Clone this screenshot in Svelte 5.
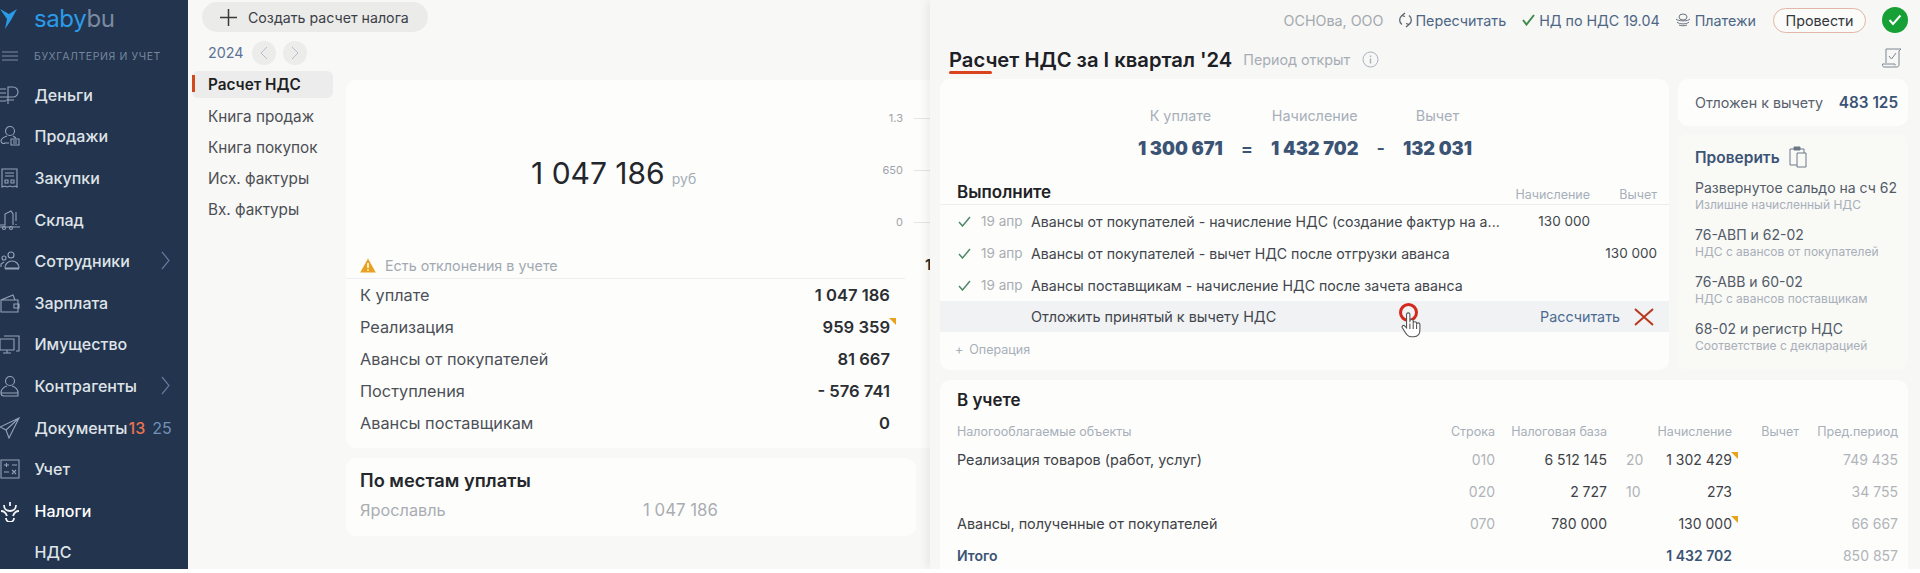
<script>
	const nav = [
		{ label: 'Деньги', icon: 'money' },
		{ label: 'Продажи', icon: 'sales' },
		{ label: 'Закупки', icon: 'buy' },
		{ label: 'Склад', icon: 'store' },
		{ label: 'Сотрудники', icon: 'staff', more: true },
		{ label: 'Зарплата', icon: 'wallet' },
		{ label: 'Имущество', icon: 'assets' },
		{ label: 'Контрагенты', icon: 'partner', more: true },
		{ label: 'Документы', icon: 'send', counts: ['13', '25'] },
		{ label: 'Учет', icon: 'calc' },
		{ label: 'Налоги', icon: 'tax', active: true },
		{ label: 'НДС' }
	];
	const tabs = ['Расчет НДС', 'Книга продаж', 'Книга покупок', 'Исх. фактуры', 'Вх. фактуры'];
	const totals = [
		['К уплате', '1 047 186'],
		['Реализация', '959 359', true],
		['Авансы от покупателей', '81 667'],
		['Поступления', '- 576 741'],
		['Авансы поставщикам', '0']
	];
	const tasks = [
		['Авансы от покупателей - начисление НДС (создание фактур на а...', '130 000', ''],
		['Авансы от покупателей - вычет НДС после отгрузки аванса', '', '130 000'],
		['Авансы поставщикам - начисление НДС после зачета аванса', '', '']
	];
	const checks = [
		['Развернутое сальдо на сч 62', 'Излишне начисленный НДС'],
		['76-АВП и 62-02', 'НДС с авансов от покупателей'],
		['76-АВВ и 60-02', 'НДС с авансов поставщикам'],
		['68-02 и регистр НДС', 'Соответствие с декларацией']
	];
	const ledger = [
		{ name: 'Реализация товаров (работ, услуг)', line: '010', base: '6 512 145', rate: '20', accrued: '1 302 429', mark: true, prev: '749 435' },
		{ name: '', line: '020', base: '2 727', rate: '10', accrued: '273', prev: '34 755' },
		{ name: 'Авансы, полученные от покупателей', line: '070', base: '780 000', rate: '', accrued: '130 000', mark: true, prev: '66 667' }
	];
</script>

<div class="page">
	<aside class="sidebar">
		<div class="brand">
			<svg class="bird" width="18" height="24" viewBox="0 0 18 24"><path d="M0 2 L9 7 L17 2 L11 13 L5 22 L7 12 Z" fill="#2b9be8"/></svg>
			<span class="logo"><b>saby</b><i>bu</i></span>
		</div>
		<div class="section">
			<svg width="16" height="10" viewBox="0 0 16 10"><path d="M0 1h16M0 5h16M0 9h16" stroke="#7b8aa0" fill="none"/></svg>
			<span>БУХГАЛТЕРИЯ И УЧЕТ</span>
		</div>
		<ul class="menu">
			{#each nav as item}
				<li class:active={item.active}>
					<span class="ico">
						{#if item.icon}
							<svg width="20" height="22" viewBox="0 0 20 22" fill="none" stroke={item.active ? '#f2f4f7' : '#93a3b8'} stroke-width="1.1">
								{#if item.icon === 'money'}
									<path d="M0 5h6M0 9h6M0 13h6M0 17h6M8 20V3h5a5 5 0 0 1 0 10H6M6 16h8"/>
								{:else if item.icon === 'sales'}
									<circle cx="10" cy="6" r="4.5"/><path d="M7 11c-3 1-6 2-6 5a2.500 2.500 0 0 0 4 2h4M13 11l3 2M11 14h8v6h-8zM13 16h4M13 18h4"/>
								{:else if item.icon === 'buy'}
									<path d="M2 2h15v18l-2-1-2 1-3-1-3 1-2-1-3 1zM5 6h9M5 9h9M5 13h3v3H5zM11 13h3v3h-3z"/>
								{:else if item.icon === 'store'}
									<path d="M0 16h5V5l6-3 2 3v11M16 3v9M16 15v1M0 18h20"/><circle cx="4" cy="19" r="1.500"/><circle cx="11" cy="19" r="1.500"/>
								{:else if item.icon === 'staff'}
									<circle cx="11" cy="5" r="3"/><circle cx="4" cy="8" r="2"/><path d="M5 18c0-4 3-7 7-7s7 3 7 7zM1 17v-3l3-2M5 19h14"/>
								{:else if item.icon === 'wallet'}
									<path d="M1 8h17v12H1zM1 8l12-5 2 5M14 12h5v4h-5z"/>
								{:else if item.icon === 'assets'}
									<path d="M0 6h14v11H0zM7 17v3M3 20h8M4 3h15v15h-3"/>
								{:else if item.icon === 'partner'}
									<circle cx="10" cy="6" r="4.500"/><path d="M7 11c-3 1-6 3-6 7h17c0-4-3-6-6-7M1 18c0 2 1 3 3 3h14v-5"/>
								{:else if item.icon === 'send'}
									<path d="M19 1 0 10l6 3 3 8zM19 1 6 13"/>
								{:else if item.icon === 'calc'}
									<path d="M1 2h18v18H1zM4 7h5M6.500 5v4M12 7h5M4 14h5M12 12l4 4M16 12l-4 4"/>
								{:else if item.icon === 'tax'}
									<path d="M10 2v4M4 5c0 4 3 6 6 6s6-2 6-6M1 11c3 0 5 2 6 5M19 11c-3 0-5 2-6 5M6 18a4 4 0 0 0 8 0" stroke-width="1.800"/>
								{/if}
							</svg>
						{/if}
					</span>
					<span class="label" class:cut={item.counts}>{item.label}</span>
					{#if item.counts}
						<span class="red">{item.counts[0]}</span><span class="blue">{item.counts[1]}</span>
					{/if}
					{#if item.more}
						<svg class="more" width="9" height="19" viewBox="0 0 9 19"><path d="M1 1l7 8.500L1 18" fill="none" stroke="#64789a" stroke-width="1.200"/></svg>
					{/if}
				</li>
			{/each}
		</ul>
	</aside>

	<section class="mid">
		<div class="create">
			<svg width="17" height="17" viewBox="0 0 17 17"><path d="M8.500 0v17M0 8.500h17" stroke="#3a3a3a" stroke-width="1.500"/></svg>
			<span>Создать расчет налога</span>
		</div>
		<div class="mid-body">
			<nav class="tabs">
				<div class="year">
					<span>2024</span>
					<span class="round"><svg width="8" height="14" viewBox="0 0 8 14"><path d="M7 1 1 7l6 6" fill="none" stroke="#b7bdc6"/></svg></span>
					<span class="round"><svg width="8" height="14" viewBox="0 0 8 14"><path d="m1 1 6 6-6 6" fill="none" stroke="#b7bdc6"/></svg></span>
				</div>
				{#each tabs as tab, i}
					<div class="tab" class:on={i === 0}>{tab}</div>
				{/each}
			</nav>
			<div class="stack">
				<div class="card summary">
					<div class="chart">
						<div class="big"><span>1 047 186</span><small>руб</small></div>
						<div class="axis">
							<div><span>1.3</span><i></i></div>
							<div><span>650</span><i></i></div>
							<div><span>0</span><i></i></div>
						</div>
					</div>
					<div class="warn">
						<svg width="16" height="15" viewBox="0 0 16 15"><path d="M8 0.500 15.800 14.500H0.200Z" fill="#e9a21f"/><path d="M8 5v5M8 11.300v1.500" stroke="#fff" stroke-width="1.500"/></svg>
						<span>Есть отклонения в учете</span>
						<b class="peek">1</b>
					</div>
					{#each totals as row}
						<div class="total">
							<span>{row[0]}</span>
							<b class:flag={row[2]}>{row[1]}</b>
						</div>
					{/each}
				</div>
				<div class="card places">
					<h3>По местам уплаты</h3>
					<div class="place"><span>Ярославль</span><span class="sum-place">1 047 186</span></div>
				</div>
			</div>
		</div>
	</section>

	<section class="panel">
		<header class="top">
			<span class="org">ОСНОва, ООО</span>
			<span class="act recount">
				<svg width="13" height="16" viewBox="0 0 13 16" fill="none" stroke="#5b6470" stroke-width="1.300"><path d="M3 3.500a5.500 5.500 0 0 0 0 9M10 3.500a5.500 5.500 0 0 1 0 9M6 1l-3 2.500 3 1M7 15l3-2.500-3-1"/></svg>
				Пересчитать
			</span>
			<span class="act declared">
				<svg width="13" height="12" viewBox="0 0 13 12" fill="none" stroke="#3f8a4c" stroke-width="2"><path d="M1 6l3.500 4.500L12 1"/></svg>
				НД по НДС 19.04
			</span>
			<span class="act">
				<svg width="16" height="14" viewBox="0 0 16 14" fill="none" stroke="#6b7480"><ellipse cx="8" cy="4" rx="4" ry="3"/><path d="M1 6c2 2.500 12 2.500 14 0M2 9c2 2.500 10 2.500 12 0M4 12c2 1 6 1 8 0"/></svg>
				Платежи
			</span>
			<button class="post">Провести</button>
			<span class="ok"><svg width="14" height="12" viewBox="0 0 14 12" fill="none" stroke="#fff" stroke-width="2"><path d="M1.500 6l3.500 4 7.500-8.500"/></svg></span>
		</header>
		<div class="heading">
			<h1>Расчет НДС за I квартал '24</h1>
			<span class="status">Период открыт</span>
			<svg width="17" height="17" viewBox="0 0 17 17" fill="none" stroke="#a9b1bc"><circle cx="8.500" cy="8.500" r="7.500"/><path d="M8.500 7.500v5M8.500 4.500v1.500" stroke-width="1.400"/></svg>
			<svg class="scroll" width="20" height="20" viewBox="0 0 20 20" fill="none" stroke="#7d8693"><path d="M4 15V1h15l-2 2v14c0 1-1 2-2 2H2c-1 0-1.500-1-1.500-2v-1H13v1.500M7 8l2.500 3L14 5"/></svg>
		</div>
		<div class="grid">
			<div class="card tasks">
				<div class="formula">
					<div><label>К уплате</label><b>1 300 671</b></div>
					<span>=</span>
					<div><label>Начисление</label><b>1 432 702</b></div>
					<span>-</span>
					<div><label>Вычет</label><b>132 031</b></div>
				</div>
				<div class="tasks-head">
					<h2>Выполните</h2>
					<span class="c1">Начисление</span>
					<span class="c2">Вычет</span>
				</div>
				{#each tasks as t}
					<div class="task">
						<svg width="13" height="11" viewBox="0 0 13 11" fill="none" stroke="#4f8a6a" stroke-width="1.500"><path d="M1 6l3.500 4L12 1"/></svg>
						<span class="date">19 апр</span>
						<span class="what">{t[0]}</span>
						<span class="c1">{t[1]}</span>
						<span class="c2">{t[2]}</span>
					</div>
				{/each}
				<div class="task pending">
					<span class="what">Отложить принятый к вычету НДС</span>
					<span class="run">Рассчитать</span>
					<svg class="cross" width="20" height="18" viewBox="0 0 20 18" fill="none" stroke="#b8391f" stroke-width="2"><path d="M1 1l18 16M19 1 1 17"/></svg>
					<span class="click"></span>
					<svg class="hand" width="20" height="27" viewBox="0 0 18 24"><path d="M5 11V3a1.500 1.500 0 0 1 3 0v7V9a1.500 1.500 0 0 1 3 0v2a1.500 1.500 0 0 1 3 0v1a1.500 1.500 0 0 1 3 0v5c0 4-2 6-5.500 6H9c-2.500 0-3.500-1-5-3.500L1.200 15c-.8-1.500 1-3 2.300-1.500L5 15z" fill="#fff" stroke="#555"/><path d="M8 11v5M11 11v5M14 12v4" stroke="#555" fill="none"/></svg>
				</div>
				<div class="add"><span>+</span>Операция</div>
			</div>
			<div class="side">
				<div class="card deferred"><span>Отложен к вычету</span><b>483 125</b></div>
				<div class="card check">
					<div class="check-head">
						<b>Проверить</b>
						<svg width="20" height="22" viewBox="0 0 20 22" fill="none" stroke="#6c7888"><path d="M8 19H1V3h14v4"/><path d="M8 7h9v14H8z"/><path d="M5 1h6v3H5z" fill="#6c7888"/></svg>
					</div>
					{#each checks as c}
						<div class="item"><div>{c[0]}</div><small>{c[1]}</small></div>
					{/each}
				</div>
			</div>
			<div class="card ledger">
				<h2>В учете</h2>
				<div class="row head">
					<span>Налогооблагаемые объекты</span><span class="r">Строка</span><span class="r">Налоговая база</span><span></span><span class="r">Начисление</span><span class="r">Вычет</span><span class="r">Пред.период</span>
				</div>
				{#each ledger as l}
					<div class="row">
						<span>{l.name}</span>
						<span class="r pale">{l.line}</span>
						<span class="r">{l.base}</span>
						<span class="pale rate">{l.rate}</span>
						<span class="r" class:flag={l.mark}>{l.accrued}</span>
						<span></span>
						<span class="r pale">{l.prev}</span>
					</div>
				{/each}
				<div class="row sum">
					<span>Итого</span><span></span><span></span><span></span><span class="r">1 432 702</span><span></span><span class="r pale">850 857</span>
				</div>
			</div>
		</div>
	</section>
</div>

<style>
	:global(body) {
		margin: 0;
		background: #fff;
	}
	.page {
		display: flex;
		width: 1920px;
		height: 569px;
		overflow: hidden;
		background: #f8f8f6;
		font-family: Inter, "Liberation Sans", sans-serif;
		font-size: 14px;
		color: #3b4048;
	}
	.sidebar {
		flex: 0 0 188px;
		background: #22344e;
		color: #dfe3e8;
	}
	.brand {
		display: flex;
		align-items: center;
		height: 38px;
	}
	.bird {
		margin-right: 16px;
	}
	.logo {
		font-size: 24px;
		line-height: 38px;
		letter-spacing: -0.4px;
	}
	.logo b {
		font-weight: 400;
		color: #2b9be8;
	}
	.logo i {
		font-style: normal;
		color: #7b8aa0;
	}
	.section {
		display: flex;
		align-items: center;
		height: 36px;
		padding-left: 2px;
		font-size: 10.5px;
		letter-spacing: 0.6px;
		color: #76869c;
	}
	.section svg {
		margin-right: 16px;
	}
	.menu {
		list-style: none;
		margin: 0;
		padding: 0;
	}
	.menu li {
		position: relative;
		display: flex;
		align-items: center;
		height: 41.6px;
		font-size: 16px;
		font-weight: 500;
	}
	.menu li.active {
		color: #fff;
	}
	.ico {
		display: flex;
		flex: 0 0 34.500px;
	}
	.label.cut {
		width: 94px;
		overflow: hidden;
		white-space: nowrap;
		flex: none;
	}
	.red {
		color: #e8734e;
		margin-right: 7px;
	}
	.blue {
		color: #7391b8;
		font-weight: 400;
	}
	.more {
		position: absolute;
		left: 161px;
		top: 11px;
	}
	.mid {
		flex: 0 0 742px;
		overflow: hidden;
		min-width: 0;
	}
	.create {
		display: flex;
		align-items: center;
		gap: 11px;
		width: 226px;
		height: 30px;
		margin: 2px 0 0 14px;
		padding-left: 18px;
		box-sizing: border-box;
		border-radius: 15px;
		background: #ebebe9;
		font-size: 14.2px;
	}
	.mid-body {
		display: flex;
		margin-top: 6px;
	}
	.tabs {
		flex: 0 0 158px;
		padding: 0 13px 0 4px;
		box-sizing: border-box;
	}
	.year {
		display: flex;
		align-items: center;
		height: 29px;
		margin-bottom: 4px;
		padding-left: 16px;
		font-size: 14.300px;
		color: #5d7296;
	}
	.year span:first-child {
		width: 44px;
	}
	.round {
		display: flex;
		align-items: center;
		justify-content: center;
		width: 24px;
		height: 24px;
		margin-right: 7px;
		border-radius: 50%;
		background: #ecedea;
	}
	.tab {
		height: 31px;
		padding-left: 16px;
		font-size: 15.300px;
		line-height: 31px;
		color: #4c4f55;
		white-space: nowrap;
	}
	.tab.on {
		position: relative;
		height: 27px;
		margin-bottom: 3px;
		line-height: 27px;
		border-radius: 6px;
		background: #ececec;
		color: #1d1f23;
		font-weight: 600;
	}
	.tab.on::before {
		content: "";
		position: absolute;
		left: 0;
		top: 4px;
		width: 3px;
		height: 17px;
		background: #cf4a1c;
	}
	.card {
		background: #fdfdfb;
		border-radius: 10px;
	}
	.stack {
		flex: 1;
		display: flex;
		flex-direction: column;
		gap: 10px;
		margin-top: 42px;
	}
	.summary {
		width: 600px;
		height: 368px;
		padding-left: 14px;
		box-sizing: border-box;
	}
	.chart {
		position: relative;
		display: flex;
		height: 172px;
	}
	.big {
		position: absolute;
		left: 171px;
		top: 75px;
		display: flex;
		align-items: baseline;
		gap: 7px;
	}
	.big span {
		font-size: 30px;
		color: #23262b;
	}
	.big small {
		font-size: 14px;
		color: #a3adb9;
	}
	.axis {
		position: absolute;
		left: 480px;
		top: 29px;
		display: flex;
		flex-direction: column;
		gap: 34px;
		font-size: 11px;
		color: #9da3ab;
	}
	.axis div {
		display: flex;
		align-items: center;
		justify-content: flex-end;
		height: 18px;
		width: 63px;
	}
	.axis i {
		position: absolute;
		left: 74px;
		width: 16px;
		height: 1px;
		background: #e5e5e5;
	}
	.warn {
		position: relative;
		display: flex;
		align-items: center;
		gap: 9px;
		width: 545px;
		height: 26px;
		margin-left: -14px;
		padding-left: 14px;
		font-size: 14.300px;
		color: #a2a9b3;
		border-bottom: 1px solid #eeeeee;
	}
	.peek {
		position: absolute;
		left: 579px;
		top: 3px;
		color: #2b2e33;
		font-size: 15px;
	}
	.total {
		display: flex;
		justify-content: space-between;
		align-items: center;
		width: 530px;
		height: 32px;
		font-size: 16.300px;
		color: #4c5058;
	}
	.total b {
		font-size: 16.600px;
		font-weight: 600;
		color: #2b2e33;
	}
	.flag {
		position: relative;
	}
	.flag::after {
		content: "";
		position: absolute;
		right: -6px;
		top: 1px;
		border-top: 7px solid #e9a21f;
		border-left: 7px solid transparent;
	}
	.places {
		width: 570px;
		height: 78px;
		padding: 11px 14px;
		box-sizing: border-box;
	}
	h3 {
		margin: 0 0 9px;
		font-size: 18.300px;
		font-weight: 600;
		color: #24272c;
	}
	.place {
		display: grid;
		grid-template-columns: 283px auto;
		font-size: 16.300px;
		color: #a9adb3;
	}
	.sum-place {
		font-size: 16.800px;
	}
	.panel {
		flex: 1;
		position: relative;
		padding: 0 12px 0 10px;
		box-shadow: -4px 0 8px rgba(0, 0, 0, 0.06);
		background: #f7f7f5;
		min-width: 0;
	}
	.top {
		display: flex;
		align-items: center;
		height: 40px;
		justify-content: flex-end;
		font-size: 14.300px;
		color: #4d6685;
	}
	.org {
		margin-right: 15px;
		color: #a4a9af;
	}
	.act {
		display: flex;
		align-items: center;
		gap: 4px;
		margin-right: 17px;
	}
	.act.recount {
		margin-right: 16px;
	}
	.act.declared {
		margin-right: 15px;
	}
	.post {
		width: 93px;
		height: 25px;
		margin-right: 16px;
		border: 1px solid #e2b7a6;
		border-radius: 13px;
		background: #fbfbf9;
		color: #33373d;
		font: inherit;
	}
	.ok {
		display: flex;
		align-items: center;
		justify-content: center;
		width: 26px;
		height: 26px;
		border-radius: 50%;
		background: #17a035;
	}
	.heading {
		position: relative;
		display: flex;
		align-items: center;
		height: 38px;
		padding-left: 9px;
		font-size: 14.300px;
	}
	.heading::after {
		content: "";
		position: absolute;
		left: 9px;
		bottom: 4px;
		width: 43px;
		height: 3px;
		border-radius: 2px;
		background: #d9431e;
	}
	h1 {
		margin: 0 11px 0 0;
		font-size: 20.200px;
		font-weight: 600;
		color: #1d2025;
	}
	.status {
		margin-right: 12px;
		color: #a7adb5;
	}
	.scroll {
		position: absolute;
		right: 6px;
		top: 8px;
	}
	.grid {
		display: grid;
		grid-template-columns: 729px 230px;
		column-gap: 9px;
		row-gap: 10px;
		margin-top: 1px;
	}
	.tasks {
		height: 291px;
	}
	.formula {
		display: flex;
		align-items: flex-end;
		padding-left: 198px;
		height: 90px;
		box-sizing: border-box;
		padding-bottom: 10px;
		font-size: 18.200px;
		font-weight: 600;
		color: #3b5375;
	}
	.formula div {
		display: flex;
		flex-direction: column;
		align-items: center;
		gap: 13px;
	}
	.formula label {
		font-size: 14.400px;
		font-weight: 400;
		color: #a7afba;
	}
	.formula span {
		padding: 0 18px;
	}
	.tasks-head {
		display: flex;
		align-items: flex-end;
		height: 36px;
		padding: 0 0 2px 17px;
		box-sizing: border-box;
		border-bottom: 1px solid #ededf0;
		font-size: 12.500px;
		color: #a7afba;
	}
	h2 {
		margin: 0;
		font-size: 17px;
		font-weight: 600;
		color: #1f2227;
	}
	.c1 {
		margin-left: auto;
		text-align: right;
	}
	.c2 {
		width: 67px;
		text-align: right;
		margin-right: 12px;
	}
	.task {
		position: relative;
		display: flex;
		align-items: center;
		height: 32px;
		padding-left: 18px;
		font-size: 13.500px;
		color: #42464d;
	}
	.date {
		width: 50px;
		margin-left: 10px;
		color: #a9adb3;
	}
	.what {
		white-space: nowrap;
		font-size: 14.170px;
	}
	.pending {
		height: 31px;
		background: #f1f2f4;
		padding-left: 91px;
	}
	.pending .what {
		font-size: 14.400px;
	}
	.run {
		margin-left: auto;
		margin-right: 14px;
		color: #4a6a92;
		font-size: 14.300px;
	}
	.cross {
		margin-right: 15px;
	}
	.click {
		position: absolute;
		left: 459px;
		top: 2px;
		width: 13px;
		height: 13px;
		border: 3px solid #d5281c;
		border-radius: 50%;
	}
	.hand {
		position: absolute;
		left: 461px;
		top: 10px;
	}
	.add {
		display: flex;
		align-items: center;
		gap: 6px;
		height: 35px;
		padding-left: 15px;
		font-size: 12.500px;
		color: #a7afba;
	}
	.side {
		display: flex;
		flex-direction: column;
		gap: 8px;
		height: 291px;
	}
	.deferred {
		display: flex;
		align-items: center;
		justify-content: space-between;
		height: 47px;
		padding: 0 10px 0 17px;
		font-size: 14.300px;
		color: #59626e;
	}
	.deferred b {
		font-size: 15.300px;
		font-weight: 600;
		color: #3b5375;
	}
	.check {
		flex: 1;
		padding: 12px 0 0 17px;
		background: #f9f9f6;
	}
	.check-head {
		display: flex;
		align-items: center;
		gap: 9px;
		height: 22px;
		margin-bottom: 11px;
		font-size: 15.500px;
	}
	.check-head b {
		font-weight: 600;
		color: #3b5375;
	}
	.item {
		height: 47px;
		font-size: 14px;
		line-height: 18px;
		color: #525b68;
	}
	.item small {
		display: block;
		font-size: 12px;
		line-height: 16px;
		color: #a8afb9;
	}
	.ledger {
		grid-column: 1 / 3;
		height: 200px;
		padding: 8px 10px 0 17px;
	}
	.ledger h2 {
		height: 31px;
		line-height: 24px;
	}
	.row {
		display: grid;
		grid-template-columns: 1fr 60px 112px 53px 72px 67px 99px;
		align-items: center;
		height: 32px;
		font-size: 14px;
		color: #3e4248;
	}
	.row:not(.head):not(.sum) > span:first-child {
		font-size: 14.400px;
	}
	.row.head {
		height: 24px;
		font-size: 12.500px;
		color: #a7afba;
	}
	.r {
		text-align: right;
		justify-self: end;
	}
	.pale {
		color: #b0b4ba;
	}
	.rate {
		padding-left: 19px;
	}
	.sum {
		font-weight: 600;
		color: #3b5375;
	}
	.sum .pale {
		font-weight: 400;
	}
</style>
